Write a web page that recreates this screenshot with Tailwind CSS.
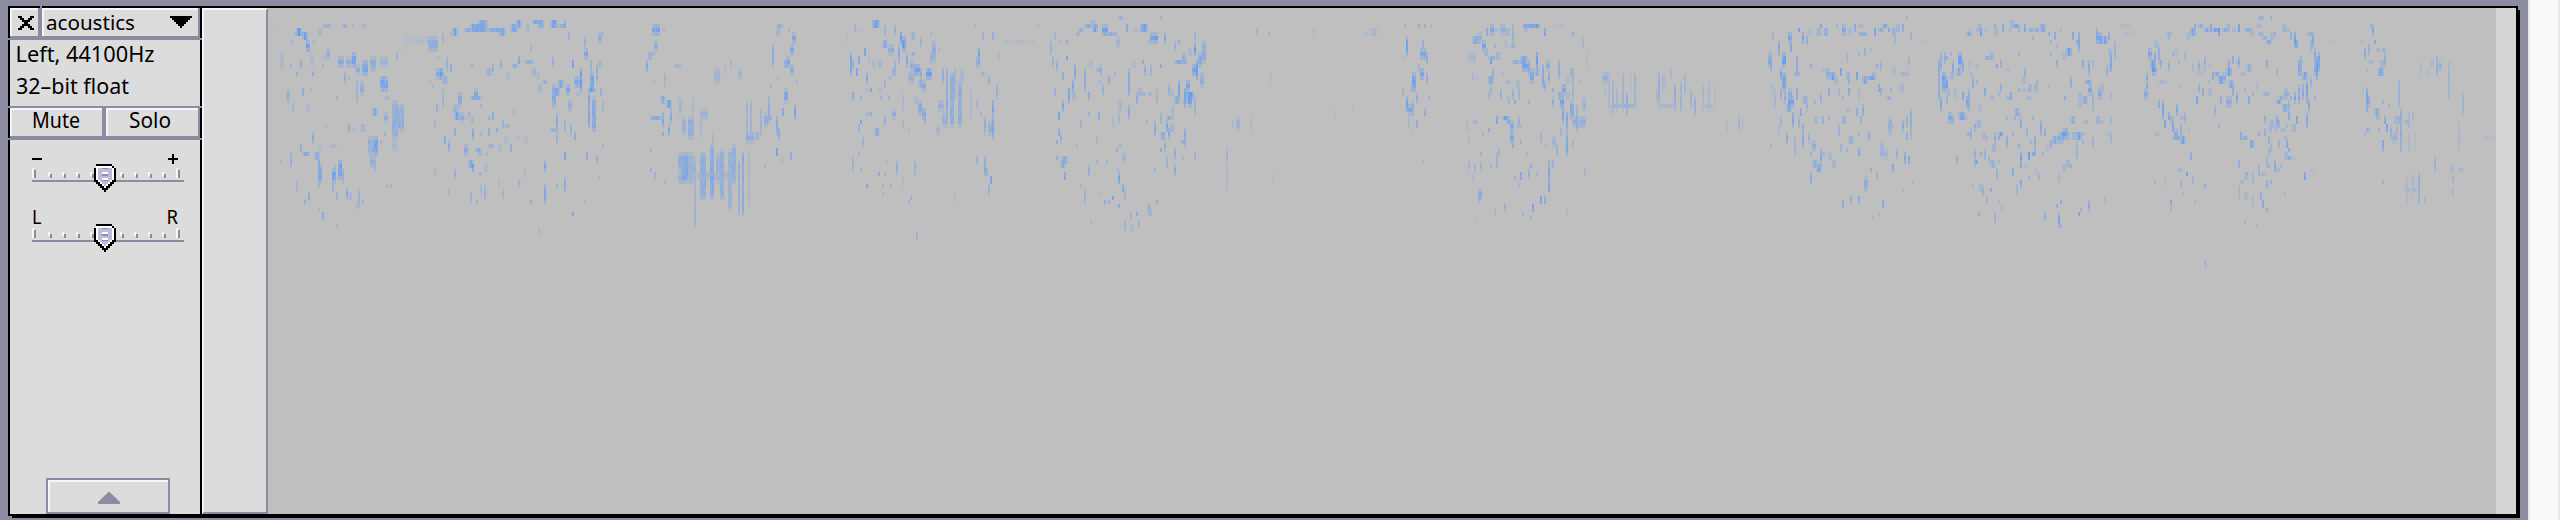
<!DOCTYPE html>
<html lang="en">
<head>
<meta charset="utf-8">
<title>acoustics</title>
<script src="https://cdn.jsdelivr.net/npm/@tailwindcss/browser@4"></script>
</head>
<body class="w-[2560px] h-[520px] overflow-hidden bg-[#8c8ca0] flex font-['Noto_Sans','Open_Sans',sans-serif]">
<main class="w-[2528px] h-[520px] shrink-0 pl-2 pt-1.5 relative">
  <div class="w-[2510px] h-[510px] bg-black pl-0.5 pt-0.5 pb-0.5 flex">
    <!-- track label -->
    <aside class="w-[190px] h-[506px] bg-[#dcdcdc] flex flex-col shrink-0">
      <header class="h-8 bg-[#8c8ca0] flex gap-1 pb-1 pr-0.5">
        <button class="w-7 h-7 border-t-2 border-l-2 border-[#f5f5fa] bg-[#dcdcdc]">
          <svg class="block" width="26" height="26" viewBox="12 10 26 26" shape-rendering="crispEdges"><path d="M18 16h4v2h2v2h4v-2h2v-2h4v2h-2v2h-2v2h-2v2h2v2h2v2h2v2h-4v-2h-2v-2h-4v2h-2v2h-4v-2h2v-2h2v-2h2v-2h-2v-2h-2v-2h-2z"/></svg>
        </button>
        <button class="w-[156px] h-7 border-t-2 border-l-2 border-[#f5f5fa] bg-[#dcdcdc]">
          <svg class="block" width="154" height="26" viewBox="44 10 154 26"><text x="46" y="30" font-size="20.5" textLength="89" lengthAdjust="spacingAndGlyphs">acoustics</text><path shape-rendering="crispEdges" d="M170 16h22v2h-2v2h-2v2h-2v2h-2v2h-2v2h-2v-2h-2v-2h-2v-2h-2v-2h-2v-2h-2z"/></svg>
        </button>
      </header>
      <section class="h-[66px]">
        <svg class="block" width="190" height="66" viewBox="10 40 190 66" font-size="21.5"><text x="15.500" y="62" textLength="139" lengthAdjust="spacingAndGlyphs">Left, 44100Hz</text><text x="16" y="94" textLength="113" lengthAdjust="spacingAndGlyphs">32–bit float</text></svg>
      </section>
      <div class="h-[34px] bg-[#8c8ca0] pt-0.5 pb-1 pr-0.5 flex gap-1">
        <button class="w-[92px] h-7 border-t-2 border-l-2 border-[#f5f5fa] bg-[#dcdcdc]"><svg class="block" width="90" height="26" viewBox="12 110 90 26"><text x="32" y="128" font-size="21" textLength="48" lengthAdjust="spacingAndGlyphs">Mute</text></svg></button>
        <button class="w-[92px] h-7 border-t-2 border-l-2 border-[#f5f5fa] bg-[#dcdcdc]"><svg class="block" width="90" height="26" viewBox="108 110 90 26"><text x="129" y="128" font-size="21" textLength="42" lengthAdjust="spacingAndGlyphs">Solo</text></svg></button>
      </div>
      <svg class="block" width="190" height="120" viewBox="10 140 190 120">
        <defs>
          <g id="slider" shape-rendering="crispEdges">
            <path fill="#f5f5fa" d="M32 168h2v10h-2zM176 168h2v10h-2zM48 172h2v4h-2zM62 172h2v4h-2zM76 172h2v4h-2zM90 172h2v4h-2zM120 172h2v4h-2zM134 172h2v4h-2zM148 172h2v4h-2zM162 172h2v4h-2z"/>
            <path fill="#8c8ca0" d="M32 180h152v2H32zM34 170h2v8h-2zM178 170h2v8h-2zM50 174h2v4h-2zM64 174h2v4h-2zM78 174h2v4h-2zM92 174h2v4h-2zM122 174h2v4h-2zM136 174h2v4h-2zM150 174h2v4h-2zM164 174h2v4h-2z"/>
            <path d="M96 164h16v2h2v2h2v14h-2v2h-2v2h-2v2h-2v2h-2v2h-2v-2h-2v-2h-2v-2h-2v-2h-2v-2h-2v-14h2z"/>
            <path fill="#fff" d="M98 166h14v2h2v12h-2v2h-2v2h-2v2h-2v2h-2v-2h-2v-2h-2v-2h-2v-2h-2v-14h2z"/>
            <path fill="#bcbcd8" d="M98 168h14v12h-2v2h-2v2h-2v2h-2v-2h-2v-2h-2v-2h-2z"/>
            <path fill="#fff" d="M102 172h6v2h-6zM102 178h6v2h-6z"/><path fill="#8c8cb4" d="M102 174h6v2h-6zM102 176h6v0h-6zM102 180h6v1h-6zM102 168h6v1h-6z"/>
          </g>
        </defs>
        <path shape-rendering="crispEdges" d="M32 158h10v2H32zM168 158h10v2h-10zM172 154h2v10h-2z"/>
        <text x="32" y="224" font-size="19" textLength="9.500" lengthAdjust="spacingAndGlyphs">L</text><text x="166.500" y="224" font-size="19" textLength="11.500" lengthAdjust="spacingAndGlyphs">R</text>
        <use href="#slider"/><use href="#slider" y="60"/>
      </svg>
      <div class="mt-auto ml-9 w-[124px] h-9 bg-[#8c8ca0] p-0.5">
        <button class="block w-[120px] h-8 bg-[#dcdcdc] border-t-2 border-l-2 border-[#f5f5fa]"><svg class="block" width="118" height="30" viewBox="50 482 118 30"><path fill="#8c8ca0" d="M109 491.500 120 502v2H98v-2z"/></svg></button>
      </div>
    </aside>
    <!-- vertical ruler -->
    <div class="ml-0.5 w-[66px] h-[506px] shrink-0 bg-[#dcdcdc] border-2 border-t-[#f5f5fa] border-l-[#f5f5fa] border-r-[#8c8ca0] border-b-[#8c8ca0]"></div>
    <!-- spectrogram -->
    <canvas id="spec" width="2228" height="506" class="block w-[2228px] h-[506px] shrink-0 bg-[#bfbfbf]"></canvas>
    <div class="w-5 h-[506px] shrink-0 bg-[#d6d6d6]"></div>
  </div>
  <!-- drop edge and border notches -->
  <div class="absolute left-3 top-[516px] w-[2508px] h-0.5 bg-black"></div>
  <div class="absolute left-[2518px] top-2.5 w-0.5 h-[508px] bg-black"></div>
  <div class="absolute left-2 top-[38px] w-0.5 h-0.5 bg-[#8c8ca0]"></div><div class="absolute left-[200px] top-[38px] w-0.5 h-0.5 bg-[#8c8ca0]"></div>
  <div class="absolute left-2 top-[106px] w-0.5 h-0.5 bg-[#8c8ca0]"></div><div class="absolute left-[200px] top-[106px] w-0.5 h-0.5 bg-[#8c8ca0]"></div>
  <div class="absolute left-2 top-[138px] w-0.5 h-0.5 bg-[#8c8ca0]"></div><div class="absolute left-[200px] top-[138px] w-0.5 h-0.5 bg-[#8c8ca0]"></div>
  <div class="absolute left-10 top-1.5 w-0.5 h-0.5 bg-[#8c8ca0]"></div>
</main>
<div class="w-8 h-[520px] shrink-0 bg-[#f9f9f9] border-x-2 border-[#e8e8e8]"></div>
<script>
// Energy patches: x, y, width, height, level (1-9), in units of 1/2.8 px across and 1/3 px down from each origin.
const bands = [
[260, `36 72 12 10 1,175 72 30 10 3,230 72 16 16 4,255 72 8 10 2,286 72 12 10 5,102 84 18 22 9,96 96 12 14 5,118 100 16 26 7,130 120 12 30 7,146 120 12 12 5,163 84 10 24 4,84 120 12 12 4,56 150 10 58 2,84 190 8 10 3,112 180 6 22 4,140 156 12 44 2,186 144 12 34 4,175 168 10 12 3,218 165 18 40 5,240 165 14 36 4,258 156 10 48 7,270 192 12 36 4,286 180 14 45 6,308 168 16 44 4,338 168 20 30 3,380 156 5 24 3,392 146 6 10 1,102 216 5 14 4,146 216 6 14 4,174 192 6 12 3,235 216 6 30 4,247 228 6 10 2,270 240 5 66 3,282 245 12 52 4,338 228 24 44 6,118 260 8 26 5,140 264 5 10 2,74 265 12 42 3,92 312 6 28 3,130 312 10 28 4,213 286 5 10 4,345 288 14 16 3,312 322 14 24 5,348 330 10 40 4,370 298 14 120 4,384 310 14 80 4,370 420 18 38 2,180 368 10 12 4,247 372 6 18 4,255 380 12 16 2,280 372 18 25 3,146 392 6 32 5,196 426 20 12 2,112 430 8 22 4,120 455 20 14 5,150 450 14 20 5,163 432 12 18 3,84 450 5 45 4,56 476 5 10 2,300 405 14 60 4,318 402 10 65 7,308 465 18 30 4,320 495 5 24 3,336 420 6 14 3,348 390 6 14 4,163 465 5 95 5,170 495 8 60 5,102 536 5 30 3,202 500 10 48 6,208 490 8 30 4,220 475 10 65 7,232 500 4 48 4,240 560 8 32 6,248 575 10 28 5,202 550 5 24 3,213 576 5 28 3,276 562 8 55 3,286 595 8 14 3,270 600 5 40 2,134 570 5 22 5,123 596 5 10 4,163 618 8 10 2,174 632 5 22 5,213 666 5 10 3,353 546 5 12 3,364 546 5 12 3,
404 108 70 20 1,472 110 30 48 4,484 120 16 40 4,490 165 12 16 3,512 96 6 30 3,530 90 10 16 4,540 84 18 22 7,570 78 20 14 5,590 72 48 20 6,612 62 26 16 5,640 78 50 14 6,668 92 22 12 5,700 74 20 18 6,716 64 16 24 6,745 66 10 28 4,764 64 36 16 6,780 56 18 26 6,812 64 20 28 6,834 66 20 14 4,852 62 5 20 5,864 96 5 28 3,490 200 20 34 5,504 204 8 36 8,522 170 8 48 4,530 192 6 24 5,510 228 16 20 5,472 240 10 16 3,484 252 8 14 3,508 262 6 60 3,490 310 6 24 4,553 276 10 42 5,540 312 22 18 3,545 340 16 24 7,562 330 10 30 4,545 384 5 20 5,570 348 12 10 3,580 330 6 12 4,588 190 12 10 4,633 205 16 24 4,650 192 6 18 4,672 174 6 28 4,686 210 12 24 4,708 190 16 12 5,724 170 6 28 5,740 184 30 12 4,762 198 12 28 5,774 220 12 20 4,780 250 10 26 5,790 236 14 14 4,758 132 8 22 2,818 165 5 36 5,818 246 12 72 5,832 238 16 20 7,824 258 14 20 7,858 250 10 34 6,874 176 6 20 7,878 230 18 40 5,894 200 8 72 7,908 108 6 30 4,908 144 10 36 6,922 180 5 36 5,924 215 12 54 6,918 264 22 14 7,918 278 6 112 6,930 286 12 102 5,946 96 12 40 5,946 176 10 22 5,960 96 6 12 3,940 190 6 54 4,952 264 6 22 4,958 300 5 36 3,864 300 10 40 5,886 280 10 14 5,826 330 6 60 5,814 380 18 14 5,830 396 6 32 4,852 360 6 40 4,868 368 8 38 5,880 392 5 20 4,590 286 32 12 5,600 268 12 34 5,616 310 6 14 3,650 330 8 22 5,708 322 10 26 3,636 350 8 16 4,676 358 6 20 4,684 372 16 14 4,590 350 10 25 4,596 378 8 34 6,640 380 6 22 4,614 396 6 10 3,660 382 6 14 4,718 404 12 10 3,684 405 10 26 4,700 428 8 20 4,738 412 10 20 3,668 436 10 24 3,640 432 14 10 4,516 412 8 20 6,526 424 8 36 5,572 430 10 36 5,600 440 20 14 5,610 450 10 14 8,585 478 18 28 6,596 495 8 22 7,625 486 10 20 4,610 515 10 14 5,630 460 8 14 3,545 500 5 32 4,488 500 5 28 2,486 360 6 28 3,852 450 5 22 6,796 475 6 34 6,852 530 5 42 5,796 555 6 60 5,756 594 8 14 6,830 546 5 16 4,616 546 5 30 3,628 552 5 50 4,590 570 5 34 4,606 594 8 10 4,668 540 8 28 2,680 558 5 30 3,722 540 5 20 3,738 500 5 35 2,526 562 5 28 2,912 456 5 18 4,942 465 5 22 4,948 522 8 10 3,960 426 6 10 2,874 640 5 14 5,780 678 8 22 2,908 594 6 8 2,
1100 74 20 34 6,1124 86 10 10 3,1104 120 10 30 4,1088 150 12 20 6,1082 175 8 34 7,1100 156 12 10 4,1098 236 10 12 3,1130 216 8 50 3,1118 288 14 24 5,1134 296 18 24 7,1148 320 6 46 5,1092 342 32 12 5,1124 335 8 44 5,1142 372 8 38 6,1128 396 6 14 5,1092 440 6 10 3,1092 500 6 10 4,1104 512 5 24 3,1130 540 6 16 3,1158 190 22 10 3,1168 290 10 55 2,1180 350 12 55 3,1198 350 14 68 4,1210 285 6 95 2,1240 320 18 30 3,1232 320 6 90 2,1266 390 6 80 2,1272 198 14 48 3,1300 192 8 36 2,1315 185 8 28 2,1338 208 10 30 3,1168 450 14 64 4,1180 460 14 92 5,1170 510 28 38 4,1198 450 14 100 3,1216 470 6 210 3,1232 455 14 138 4,1260 435 12 170 5,1275 450 16 100 3,1290 440 12 155 4,1308 440 10 190 3,1322 430 10 120 4,1338 480 8 165 4,1350 450 8 190 5,1365 440 6 185 2,1222 520 100 20 2,1360 300 6 120 3,1374 296 8 130 3,1362 390 24 34 4,1398 320 8 80 3,1410 340 10 50 4,1384 396 16 28 3,1420 285 6 82 4,1444 74 24 12 4,1446 84 12 20 6,1478 84 8 10 3,1490 96 12 40 6,1484 135 10 30 5,1474 164 12 30 6,1466 180 10 28 8,1486 190 10 30 5,1432 130 6 66 4,1426 246 6 12 3,1446 225 10 10 3,1466 260 10 45 5,1498 240 6 10 2,1460 326 8 18 5,1496 310 5 46 6,1446 342 5 60 5,1452 380 8 32 6,1426 352 8 12 4,1446 440 5 20 6,1456 465 12 20 2,1484 456 6 24 4,1410 495 8 12 2`],
[820, `70 100 8 36 1,148 60 20 26 7,94 74 6 18 3,104 84 16 12 1,180 72 8 40 4,206 74 8 40 4,222 96 8 30 8,230 108 10 48 7,250 98 16 24 3,175 120 14 22 5,190 134 14 32 4,216 134 6 56 5,240 150 8 50 5,250 156 14 14 4,122 142 8 22 6,84 150 5 66 6,86 184 12 24 7,100 200 6 26 6,108 164 8 20 5,148 180 12 18 3,162 178 10 24 4,136 156 5 38 2,202 198 12 26 6,190 226 12 12 3,180 240 6 24 3,206 178 6 50 4,252 176 12 34 4,246 210 18 32 4,262 195 18 36 7,280 205 8 30 5,276 240 14 20 5,296 206 16 30 7,306 156 8 40 4,316 120 10 70 4,280 110 6 30 3,306 90 8 14 2,332 146 8 8 2,130 216 5 30 5,140 260 5 14 6,126 258 5 14 3,90 280 5 18 5,112 286 6 10 4,163 265 10 16 3,170 286 6 8 3,284 240 12 40 6,262 285 12 28 4,276 300 10 44 5,286 318 12 40 6,292 350 8 28 4,344 205 5 44 5,354 202 8 165 4,364 210 10 170 4,376 205 6 100 3,386 240 10 140 4,394 208 12 50 2,330 294 18 40 4,340 340 14 46 3,326 368 10 34 3,230 270 6 60 2,202 318 10 30 4,190 284 6 14 3,130 330 10 16 5,140 340 5 16 5,112 354 8 14 6,108 370 8 18 3,150 378 18 20 5,172 368 12 14 3,180 346 6 26 4,230 356 6 18 3,246 380 5 10 2,118 402 6 36 4,106 450 8 12 3,90 462 5 46 4,110 500 8 10 3,213 474 5 46 4,264 474 5 46 4,186 480 6 10 2,163 520 6 14 6,180 510 6 10 3,130 546 8 12 6,174 546 5 10 3,197 546 8 12 3,232 525 8 34 2,250 582 8 12 4,246 594 6 10 3,174 570 6 8 2,268 700 5 26 3,340 500 12 8 1,376 560 5 44 1,420 265 6 95 2,
440 140 8 30 7,434 165 12 30 5,456 98 6 22 4,480 96 6 22 4,432 74 5 8 3,450 214 16 14 3,468 226 8 26 5,492 250 5 46 4,500 150 5 20 2,484 294 5 50 6,480 346 6 68 6,460 350 8 54 4,470 356 12 44 4,434 295 8 20 3,446 335 6 8 2,460 462 5 58 5,466 500 5 22 4,478 522 5 24 6,470 548 5 34 4,434 466 6 18 3,515 122 70 8 1,560 122 45 8 1,600 75 22 6 1,
646 120 6 46 3,652 165 8 36 4,660 180 5 36 4,686 165 6 16 6,678 210 6 28 4,655 260 8 22 4,666 124 12 8 3,690 122 8 10 4,655 98 5 26 3,715 94 12 12 7,722 84 14 14 5,738 72 20 12 5,760 76 16 20 7,756 62 18 12 3,790 72 14 32 7,804 90 16 14 6,818 90 14 16 4,826 110 12 34 4,832 48 18 10 4,856 74 8 20 5,880 84 10 12 4,896 74 20 18 7,908 88 8 10 5,925 96 12 34 6,936 100 10 30 7,920 118 10 10 5,965 98 8 32 7,950 48 6 12 4,990 118 6 36 4,1004 122 6 8 4,1048 132 8 34 8,1048 96 5 36 4,1030 146 12 18 4,1068 120 12 70 4,1060 150 10 50 5,1012 150 10 34 4,990 184 40 14 5,1008 184 10 12 7,1040 196 14 40 7,1054 180 8 60 7,1064 220 10 50 4,1026 242 12 30 7,1020 260 8 60 7,1032 270 12 50 7,1022 280 20 18 8,1002 236 8 65 6,992 290 16 22 5,972 250 8 38 4,980 262 10 20 4,1048 285 5 55 4,1012 305 14 14 4,
712 190 5 44 5,706 236 8 38 6,696 262 8 50 7,704 280 10 20 5,678 302 5 30 7,668 340 8 28 6,664 380 5 26 4,670 396 6 36 4,662 424 8 14 4,738 204 5 66 4,750 174 14 20 2,750 280 6 26 5,774 200 18 12 4,786 192 6 34 4,780 244 12 14 4,792 246 8 34 4,804 225 6 26 4,824 216 5 10 3,860 206 5 80 5,876 178 12 18 3,900 178 6 12 4,908 186 8 36 5,926 190 5 36 4,952 190 8 12 5,892 260 10 20 6,886 278 6 36 5,902 280 12 16 5,920 280 12 12 5,940 268 5 50 3,834 294 12 30 3,862 316 6 48 5,832 340 6 30 3,816 350 8 34 2,780 330 5 26 5,750 330 5 12 3,730 360 8 18 4,912 355 5 10 3,934 358 6 48 5,952 335 5 30 4,968 344 18 14 6,970 355 8 30 7,980 370 12 28 6,972 386 6 30 6,952 400 16 18 5,986 310 8 42 3,1020 380 6 65 5,1010 425 18 12 4,964 420 8 30 4,952 448 6 12 5,970 462 5 36 5,990 442 5 30 6,990 486 5 34 5,1012 466 8 8 3,1046 456 5 22 3,936 500 5 12 3,834 426 12 12 5,826 442 8 16 4,846 452 12 34 3,770 412 6 26 3,716 428 5 8 2,680 465 14 28 6,674 485 18 28 5,684 512 8 20 6,662 462 6 12 5,750 486 5 36 5,770 480 6 8 3,800 474 5 16 3,836 512 8 30 7,828 500 12 10 4,846 546 6 20 5,852 566 6 32 4,740 560 8 44 4,730 546 6 10 3,780 570 12 10 2,796 594 6 12 5,808 602 8 12 4,820 592 8 10 6,832 606 5 10 5,918 606 6 28 4,920 628 10 24 6,940 594 5 10 4,868 630 6 22 3,882 640 6 12 5,852 658 8 32 4,870 676 10 20 4,888 665 6 22 3,756 664 5 12 2,
1260 210 5 32 2,1166 346 10 46 3,1156 360 5 20 2,1204 352 5 50 2,1134 440 8 46 3,1136 490 6 80 2,1220 84 5 22 3,1256 92 8 14 3,1370 86 14 18 1,1516 96 20 12 1,1540 84 20 24 2,1490 300 5 36 1,1440 320 4 30 1,1266 510 5 30 1`],
[1380, `68 72 6 10 3,104 72 8 12 5,124 72 5 10 4,140 74 5 8 2,73 106 6 56 6,74 116 8 16 8,112 144 16 34 6,120 120 8 26 4,130 160 8 36 5,114 200 10 30 6,130 210 8 36 6,92 215 12 60 6,104 196 6 26 3,86 250 14 26 4,64 258 5 20 3,62 168 5 10 2,100 270 6 38 5,74 290 8 50 7,78 310 10 34 6,92 300 8 46 4,122 320 6 22 4,136 288 5 8 3,78 345 5 36 3,100 356 8 18 5,118 474 5 12 2,84 400 5 14 1,
258 108 22 18 5,275 98 12 38 4,294 84 6 26 4,310 74 12 30 7,320 84 10 16 4,338 72 14 30 4,352 84 12 22 5,372 72 6 54 4,286 120 10 40 6,290 146 12 20 6,300 164 20 12 5,310 176 8 16 7,325 156 10 24 6,318 130 8 16 4,248 154 24 34 2,400 72 44 10 6,402 82 10 12 5,432 70 14 10 7,458 84 8 22 6,480 74 40 5 1,536 94 6 10 6,566 108 6 30 3,574 150 6 44 2,362 134 18 12 4,346 125 10 18 3,390 168 20 24 6,396 185 14 38 7,370 180 22 10 4,412 176 6 44 5,420 200 10 42 6,436 158 8 44 8,432 205 14 28 5,455 192 5 72 5,466 180 10 36 5,472 210 8 36 5,498 180 5 54 5,530 200 10 26 7,520 232 10 18 4,508 248 12 40 7,496 270 10 22 7,484 258 8 12 4,482 290 8 30 4,505 286 12 34 7,522 275 12 28 4,540 216 8 80 3,556 240 10 10 3,534 295 12 54 5,546 310 8 80 4,510 325 8 50 6,520 330 6 64 6,540 350 10 40 4,556 350 20 36 4,566 290 10 50 3,520 390 6 66 5,540 420 5 18 2,505 388 6 22 3,315 200 8 34 5,300 230 14 18 6,310 250 6 30 4,304 275 6 22 3,258 216 6 28 2,270 226 6 16 2,340 216 5 8 2,352 244 10 12 6,378 236 10 24 4,338 264 6 34 4,350 282 10 10 4,370 265 6 30 4,384 248 6 50 3,374 305 8 14 5,356 305 6 14 3,416 305 8 16 4,458 240 6 36 5,326 344 8 20 5,342 345 20 16 6,350 356 14 10 5,388 345 8 40 4,364 365 10 38 6,362 396 10 30 6,372 415 8 20 4,382 376 14 12 4,392 420 6 16 4,258 354 14 14 4,240 358 8 40 3,304 380 8 10 4,286 400 5 14 3,248 410 6 20 2,332 440 5 20 3,322 455 5 50 4,310 490 6 14 3,280 455 8 14 3,278 475 6 30 3,248 476 8 34 3,262 495 8 18 3,406 450 5 12 3,450 400 6 36 4,458 428 10 8 3,480 405 10 38 4,490 430 5 34 4,484 474 8 20 4,472 474 5 80 5,472 546 5 18 5,420 495 6 12 5,412 508 6 30 4,392 520 8 24 5,376 522 5 12 3,436 520 5 12 3,258 520 5 34 2,274 558 8 44 4,282 562 8 36 5,450 582 8 28 7,458 588 8 22 4,388 540 5 26 2,348 616 5 22 4,320 622 6 20 2,426 616 5 24 6,398 640 6 12 3,420 650 5 14 3,520 628 5 26 2,572 498 5 24 3,262 655 6 10 1,
622 212 14 36 4,628 250 8 40 2,640 214 6 120 2,650 240 8 110 3,662 265 8 74 3,676 215 6 120 3,690 270 8 76 4,712 216 5 110 3,700 220 5 70 1,646 316 70 12 3,780 220 8 100 4,774 266 8 50 2,790 212 12 60 2,810 202 8 40 2,824 250 6 85 4,840 240 6 100 3,850 216 6 70 3,870 265 8 65 3,880 288 8 55 4,902 250 8 80 2,920 240 6 90 2,906 312 26 14 2,780 315 50 8 2,934 246 5 66 1,966 356 6 34 2,1002 344 8 46 3,1014 356 6 20 1,
1096 98 8 18 3,1086 160 10 50 5,1094 180 8 34 5,1090 250 10 26 3,1100 262 12 20 3,1116 120 8 46 5,1126 156 10 44 7,1120 200 6 40 6,1140 96 12 36 7,1146 130 6 28 5,1128 220 10 60 6,1140 260 10 30 5,1132 280 8 36 5,1144 290 14 38 7,1136 310 16 20 6,1104 275 6 50 3,1118 268 6 40 4,1120 350 5 36 3,1112 370 5 34 2,1154 330 8 46 6,1166 168 5 50 5,1160 215 18 14 5,1165 258 8 38 6,1180 285 16 22 4,1190 300 8 32 4,1174 320 6 28 5,1170 345 8 40 5,1136 390 5 38 5,1160 410 5 62 3,1182 400 6 50 6,1196 400 8 38 4,1184 370 5 26 4,1092 428 6 12 2,1170 84 6 12 6,1184 96 8 30 6,1192 104 6 22 4,1200 86 10 18 3,1222 84 14 22 4,1230 74 6 14 5,1242 84 12 20 8,1276 74 6 8 3,1294 72 10 32 6,1312 84 12 20 4,1328 74 6 20 5,1340 66 18 12 3,1340 94 30 12 4,1384 84 6 24 7,1394 84 16 8 5,1406 72 18 12 6,1422 78 8 14 6,1434 84 10 20 7,1444 74 12 18 6,1460 72 6 20 5,1474 48 5 12 3,1354 144 8 26 4,1304 156 6 34 3,1336 156 8 10 3,1370 146 5 16 3,1204 188 5 10 5,1250 208 12 34 5,1262 210 14 26 7,1240 204 10 12 3,1270 222 10 22 5,1290 205 8 28 6,1302 220 10 24 7,1312 234 8 14 4,1334 214 8 22 6,1352 226 18 26 6,1366 232 20 16 8,1376 215 10 22 6,1398 174 6 36 3,1386 196 6 12 4,1392 250 5 26 5,1400 265 6 26 4,1414 282 16 12 4,1430 262 6 16 4,1455 252 10 24 5,1436 192 10 40 2,1458 214 26 10 3,1480 170 8 30 3,1440 108 6 24 3,1484 96 6 26 3,1230 275 6 36 4,1256 266 6 26 4,1310 265 6 20 5,1284 264 6 26 3,1340 264 5 30 3,1216 296 6 16 4,1296 286 6 10 3,1240 345 5 20 4,1256 345 8 14 4,1216 350 10 24 5,1292 350 10 24 7,1284 368 8 34 4,1304 325 10 12 4,1330 324 6 18 4,1352 312 8 32 5,1346 344 8 22 4,1366 390 6 26 4,1312 402 14 20 4,1336 400 5 16 3,1288 432 5 26 3,1212 420 10 30 5,1206 450 8 16 5,1230 440 8 46 5,1240 460 10 14 5,1252 454 10 20 5,1210 485 14 28 5,1206 510 6 34 6,1222 490 16 18 6,1268 476 12 18 5,1336 440 6 18 5,1306 440 5 14 3,1482 320 8 90 4,1462 355 8 32 6,1470 345 6 30 5,1424 345 10 60 3,1474 395 6 20 4,1436 370 6 10 2,1400 425 10 60 3,1410 445 12 40 3,1446 445 6 34 4,1466 450 8 40 7,1476 465 6 26 5,1432 496 8 24 5,1374 500 8 14 4,1386 520 8 28 3,1356 525 10 50 4,1294 596 8 18 5,1316 582 5 24 4,1336 582 6 24 5,1406 596 5 20 5,1392 640 6 14 3,1378 645 6 10 3,1460 560 5 12 3,1490 545 5 10 2,1508 118 30 12 1,1562 180 6 120 5`],
[1940, `0 160 6 60 4,10 158 8 34 5,18 165 8 12 5,28 160 6 12 4,34 178 6 46 5,44 200 14 20 5,52 158 10 52 7,62 176 8 38 7,6 216 12 40 7,4 230 14 50 6,28 220 12 28 5,0 290 5 48 5,18 262 12 26 5,14 285 8 24 3,40 268 6 40 3,62 280 8 26 6,72 290 8 34 7,48 330 20 22 6,68 342 12 14 5,22 340 12 34 6,34 350 8 24 4,80 260 5 70 5,90 224 5 36 6,100 236 8 12 4,106 310 12 22 4,78 180 10 20 3,84 220 5 10 3,96 190 14 10 2,
74 96 18 12 6,80 84 10 12 4,102 84 10 10 5,112 84 6 24 7,106 72 12 10 5,124 84 10 12 4,152 84 10 18 5,150 74 8 10 4,176 74 8 22 5,190 84 10 8 4,196 62 10 20 5,204 66 20 16 7,218 78 8 12 4,234 66 8 24 5,248 78 14 8 5,264 78 16 12 5,278 66 16 18 6,260 108 8 10 4,304 96 8 12 4,318 96 8 20 5,306 120 6 12 3,338 78 8 6 2,370 96 8 20 6,384 100 8 54 6,378 122 8 12 4,434 86 8 48 6,444 96 10 30 6,455 108 14 18 6,468 96 8 26 4,440 118 14 14 6,470 145 12 20 5,478 156 8 54 6,488 125 5 60 4,462 190 10 18 3,350 148 14 22 7,340 158 10 20 4,326 182 6 24 4,310 156 6 12 3,324 134 8 10 3,124 166 26 10 4,138 160 10 20 6,158 190 6 14 6,168 175 5 20 4,184 202 12 12 3,216 156 6 10 4,234 208 5 20 4,228 228 10 22 4,124 262 5 20 5,140 282 10 16 6,170 250 5 24 4,162 276 6 12 4,186 286 18 12 4,196 280 5 20 5,216 258 8 14 4,232 264 12 12 4,248 256 10 26 6,262 246 10 24 6,240 284 14 10 3,304 250 6 14 3,266 236 6 18 3,348 284 8 14 4,362 230 6 36 6,400 180 8 28 5,414 182 6 46 5,424 178 6 20 3,404 240 24 12 5,412 250 12 34 6,388 270 10 24 5,398 286 14 22 6,386 295 10 22 4,426 280 6 60 4,444 265 10 36 6,450 252 10 24 5,464 208 5 24 4,478 280 6 20 2,402 354 10 14 6,434 346 12 20 6,448 355 10 14 5,478 350 8 20 3,362 350 16 22 4,466 400 12 14 3,476 398 6 36 4,206 325 14 24 5,220 338 10 20 4,222 362 8 28 5,208 350 6 14 3,256 346 6 16 4,100 355 14 18 4,96 366 6 26 4,106 375 12 14 4,280 360 6 44 5,290 384 8 20 4,262 410 8 34 5,250 420 8 14 4,240 384 8 18 3,182 345 5 14 3,74 400 14 14 4,84 380 8 38 4,120 390 10 26 4,128 412 6 12 3,150 400 8 32 5,160 400 14 16 7,144 430 10 18 6,164 412 6 12 5,184 405 8 34 6,202 396 6 10 4,216 430 6 10 4,306 422 5 24 4,314 402 16 22 5,328 396 18 30 5,342 384 14 36 7,354 396 12 26 6,370 392 10 28 5,382 390 14 28 7,396 400 10 12 4,380 420 8 50 3,400 425 5 10 3,426 410 5 30 4,298 430 12 18 4,94 440 5 56 4,98 480 8 16 5,110 456 8 14 4,124 446 6 30 4,134 470 8 20 3,142 485 14 22 4,154 500 8 34 5,162 474 5 16 3,202 498 5 24 5,224 450 6 34 7,226 480 8 22 5,246 450 8 22 7,256 456 8 12 5,264 445 5 18 4,284 450 5 10 3,236 490 10 16 4,262 500 12 22 3,276 520 8 28 3,246 522 8 10 3,224 535 6 22 5,212 550 5 30 4,106 546 16 24 3,118 560 6 22 4,140 568 5 14 5,92 550 5 8 2,128 592 5 28 3,166 616 12 20 4,150 630 6 40 4,105 640 6 14 6,162 600 8 8 2,330 510 5 30 3,340 490 10 18 5,350 478 10 18 5,362 486 8 10 4,382 442 5 30 4,44 462 5 24 4,
292 640 5 24 4,326 616 6 14 4,330 630 5 44 6,336 675 5 12 4,386 640 8 14 5,394 622 6 16 4,414 594 6 36 5,460 592 5 22 2,336 595 5 10 4,500 76 40 6 1,510 100 40 12 1,
600 120 10 18 5,584 144 10 36 6,586 176 16 18 7,594 186 10 30 8,598 156 8 30 6,612 132 6 60 4,614 180 6 28 5,578 216 8 40 5,570 262 12 40 6,574 240 8 36 5,586 208 20 10 3,612 240 28 8 2,632 98 14 14 4,640 100 6 26 4,640 176 6 34 4,648 156 8 10 3,654 144 10 18 3,668 180 5 10 3,682 150 8 20 3,666 250 12 8 3,610 296 8 20 4,622 296 5 60 6,626 355 5 28 6,638 335 8 18 5,644 344 12 26 8,650 368 8 20 6,656 385 10 34 5,662 310 8 36 6,670 345 10 14 5,682 330 8 30 4,672 366 6 32 5,674 402 14 20 7,652 412 26 12 5,600 400 14 12 2,696 380 8 12 2,698 452 8 20 4,666 500 12 10 5,690 520 8 14 6,704 526 8 28 3,626 522 5 36 2,598 534 6 10 3,738 546 6 14 4,670 536 6 26 3,646 594 6 14 6,644 610 5 20 3,712 596 5 8 2,680 580 5 12 2,
690 90 10 18 5,702 84 16 20 7,712 74 8 12 5,722 72 14 12 5,738 78 14 12 6,754 74 8 18 5,762 78 22 8 6,776 82 8 24 8,790 78 18 8 5,800 66 10 18 6,818 78 12 14 4,834 74 8 20 6,852 78 28 6 4,868 84 10 18 4,892 48 14 12 5,926 48 8 12 4,882 66 16 10 3,888 98 14 12 4,900 112 14 14 5,914 116 14 14 7,924 96 12 26 5,936 98 8 14 4,956 74 12 22 7,968 86 10 12 6,978 92 6 22 5,990 98 8 42 7,996 115 5 22 5,1022 100 12 12 4,1034 96 6 16 5,1040 100 8 50 6,1048 140 8 46 5,1054 164 8 66 7,1060 150 8 60 6,1048 192 8 30 5,1036 120 5 34 4,1010 170 8 50 6,1004 185 8 44 5,1002 214 10 14 8,1016 220 14 28 7,1024 244 6 70 6,1002 250 6 54 5,1012 255 8 50 6,1036 230 6 30 4,1046 285 5 14 4,1028 300 8 34 6,1024 330 5 46 6,992 270 5 36 6,980 286 8 14 5,996 345 5 24 7,984 368 12 22 6,
722 180 8 36 4,732 200 10 14 4,740 168 8 34 4,750 186 10 12 4,706 192 5 28 2,716 216 10 14 3,726 216 10 12 4,760 210 6 20 4,768 220 14 14 6,780 230 18 18 7,792 215 12 30 6,800 204 14 18 7,804 184 6 26 5,816 168 8 26 5,826 176 10 16 5,836 166 8 32 5,858 190 14 20 4,840 216 16 10 3,808 240 14 20 5,820 252 8 30 6,826 270 8 34 7,812 286 6 34 5,798 288 12 30 5,786 290 8 18 4,768 314 6 32 4,750 264 10 26 4,732 260 6 26 4,716 282 5 22 6,724 246 6 24 4,748 240 6 14 3,912 176 5 24 5,938 206 6 26 3,886 240 5 30 2,864 284 8 24 6,876 280 5 14 3,900 280 20 10 3,850 262 6 12 3,944 284 14 14 5,962 264 12 30 5,968 276 12 14 7,942 300 16 14 6,956 316 14 24 6,972 300 8 30 5,974 334 8 18 5,938 344 8 20 6,926 360 12 22 6,920 376 12 26 5,934 370 10 20 5,944 355 8 22 4,906 378 8 18 4,906 345 5 20 4,952 380 14 10 3,970 372 6 16 3,840 392 6 28 5,848 404 14 12 5,868 415 8 24 5,876 425 8 24 4,890 400 8 12 4,920 405 8 20 4,926 426 8 26 3,944 420 5 18 4,964 402 10 12 5,970 418 6 20 5,976 438 8 16 6,962 450 10 24 7,970 470 14 14 6,986 465 12 10 3,950 486 6 12 3,936 474 6 30 6,942 498 10 10 5,910 462 5 40 4,918 440 6 20 3,890 486 5 20 3,916 490 8 16 4,834 474 5 22 4,850 510 12 20 4,840 535 10 14 4,858 520 8 16 4,834 550 6 50 3,850 572 10 26 4,876 515 6 40 3,890 498 6 26 3,896 520 14 14 3,912 534 5 20 4,924 545 5 12 4,896 572 8 28 4,904 594 6 20 5,874 582 6 30 3,910 618 8 10 4,1020 520 5 24 6,852 658 5 12 2,884 666 5 10 2,964 570 5 10 2,776 376 8 14 4,738 776 6 20 3,744 794 5 10 2,1036 500 10 8 2,
1080 122 30 6 1,1176 122 12 10 3,1210 74 5 34 6,1206 72 6 8 4,1216 120 6 12 5,1188 140 5 36 6,1196 134 6 30 4,1198 180 10 14 5,1222 144 12 12 5,1240 144 10 12 6,1242 156 6 44 4,1234 180 10 20 5,1212 180 6 16 3,1224 204 18 26 8,1228 200 12 24 7,1192 205 8 12 2,1184 250 5 40 2,1194 264 5 70 6,1198 290 6 30 5,1216 320 14 24 6,1218 340 10 20 6,1240 294 6 14 4,1252 312 8 8 3,1192 380 6 14 5,1200 378 8 10 3,1228 378 5 14 3,1244 345 6 18 5,1248 368 6 22 6,1188 400 5 12 3,1240 415 6 20 5,1240 440 5 14 3,1238 544 5 14 4,1260 366 6 50 4,1266 400 14 34 3,1270 350 20 26 3,1282 240 6 80 4,1288 320 8 130 4,1278 370 6 40 3,1300 356 14 16 3,1308 330 6 50 3,1324 336 8 28 3,1312 390 6 58 2,1326 390 5 58 1,1346 176 8 52 2,1360 208 12 18 2,1374 178 10 20 3,1388 168 6 60 4,1394 180 10 38 3,1420 180 12 12 2,1422 190 5 102 3,1462 280 5 68 3,1452 356 5 90 2,1448 430 8 16 2,1384 465 8 50 3,1430 490 12 28 4,1436 510 8 40 3,1450 498 14 8 2,1434 560 6 20 2,1306 525 6 85 2,1320 515 6 70 2,1336 510 8 94 4,1300 558 40 10 2,1354 582 6 22 2,1520 404 40 8 1`]
];
const ctx = document.getElementById('spec').getContext('2d');
// The background turns slightly bluer with level until it reaches the peak colour.
const levels = new Map();
let seed = 7;
const rand = () => (seed = (seed * 16807) % 2147483647) / 2147483647;
function put(cx, cy, a) {
  const k = cx + ',' + cy;
  levels.set(k, Math.max(levels.get(k) || 0, a));
}
for (const [origin, text] of bands) {
  for (const item of text.split(',')) {
    const [x, y, w, h, level] = item.trim().split(' ').map(Number);
    if (!w) continue;
    const x0 = Math.round((origin + x / 2.8 - 268) / 2);
    const y0 = Math.round((y / 3 - 8) / 4);
    const nx = Math.max(1, Math.round(w / 5.6)), ny = Math.max(1, Math.round(h / 12));
    for (let i = 0; i < nx; i++) for (let j = 0; j < ny; j++) {
      const corner = (nx > 1 && (i === 0 || i === nx - 1)) && (j === 0 || j === ny - 1);
      const end = ny > 2 && (j === 0 || j === ny - 1);
      put(x0 + i, y0 + j, level / 9 * (corner ? .45 : end ? .6 : 1) * (.65 + .35 * rand()));
    }
  }
}
for (const [key, a] of levels) {
  const [cx, cy] = key.split(',').map(Number);
  ctx.fillStyle = `rgba(77,148,255,${a.toFixed(3)})`;
  ctx.fillRect(cx * 2, cy * 4, 2, 4);
}
</script>
</body>
</html>
